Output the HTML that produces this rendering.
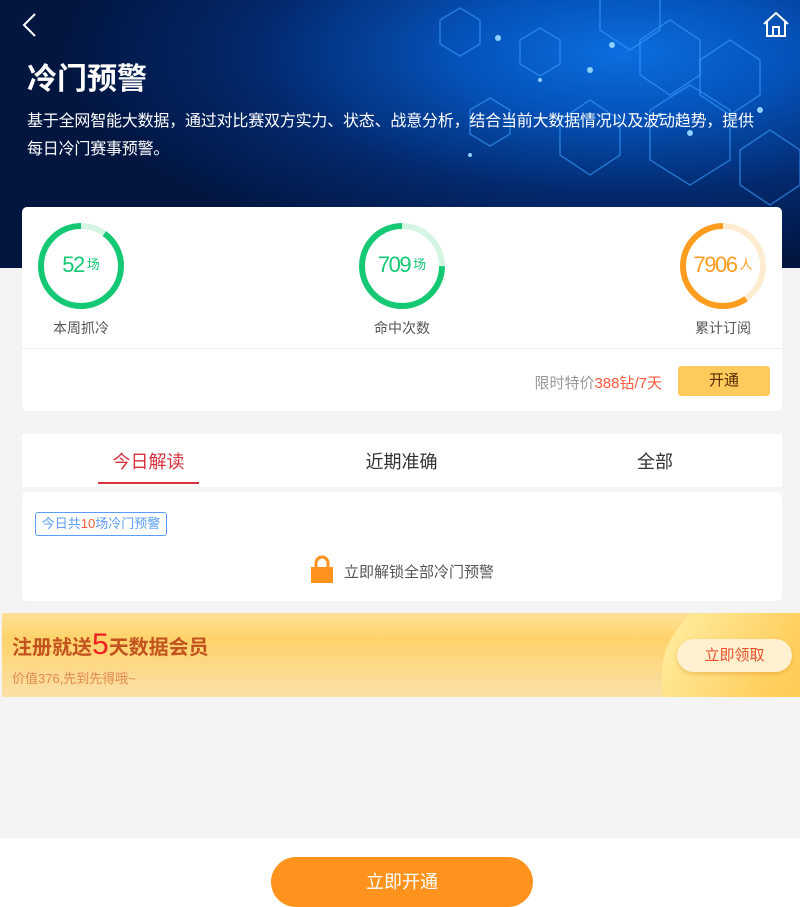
<!DOCTYPE html>
<html><head><meta charset="utf-8"><style>
*{margin:0;padding:0;box-sizing:border-box}
body{width:800px;height:907px;background:#f4f4f4;font-family:"Liberation Sans","Noto Sans CJK SC",sans-serif;position:relative;overflow:hidden}
.hd{position:absolute;left:0;top:0;width:800px;height:268px;background:radial-gradient(ellipse 70% 80% at 78% 20%,#0a6ee0 0%,#0552b8 30%,#03296e 65%,#021640 100%);overflow:hidden}
.hd h1{position:absolute;left:27px;top:54px;color:#fff;font-size:30px;font-weight:bold}
.hd p{position:absolute;left:27px;top:108px;width:755px;color:#fff;font-size:16px;line-height:28px;letter-spacing:-0.2px}
.card{position:absolute;left:22px;width:760px;background:#fff;border-radius:5px}
.ring{position:absolute;top:221px;width:90px;height:90px}
.lbl{position:absolute;top:318px;font-size:14px;color:#555;width:120px;text-align:center}
.num{position:absolute;top:252px;width:90px;text-align:center;font-size:22px;letter-spacing:-1.5px}
.num small{font-size:13px;letter-spacing:0;vertical-align:3px;margin-left:3px}
</style></head><body>
<div class="hd">
<svg width="800" height="268" style="position:absolute;left:0;top:0" fill="none" stroke="#3b9cff" stroke-opacity=".6" stroke-width="1.5">
<polygon points="640,40 670,20 700,40 700,75 670,95 640,75"/>
<polygon points="700,60 730,40 760,60 760,95 730,115 700,95"/>
<polygon points="470,110 490,98 510,110 510,134 490,146 470,134"/>
<polygon points="560,120 590,100 620,120 620,155 590,175 560,155"/>
<polygon points="650,110 690,85 730,110 730,160 690,185 650,160"/>
<polygon points="740,150 770,130 800,150 800,185 770,205 740,185"/>
<polygon points="440,20 460,8 480,20 480,44 460,56 440,44"/>
<polygon points="520,40 540,28 560,40 560,64 540,76 520,64"/>
<polygon points="600,0 630,-20 660,0 660,30 630,50 600,30"/>
<g fill="#8fd0ff" stroke="none"><circle cx="498" cy="38" r="3"/><circle cx="612" cy="45" r="3"/><circle cx="590" cy="70" r="3"/><circle cx="540" cy="80" r="2"/><circle cx="690" cy="133" r="3"/><circle cx="760" cy="110" r="3"/><circle cx="470" cy="155" r="2"/><circle cx="660" cy="115" r="2"/></g>
</svg>
<svg style="position:absolute;left:20px;top:12px" width="20" height="26"><polyline points="15,2 4,13 15,24" stroke="#fff" stroke-width="2" fill="none"/></svg>
<svg style="position:absolute;left:762px;top:10px" width="28" height="28" fill="none" stroke="#fff" stroke-width="2"><polyline points="2,14 14,3 26,14"/><polyline points="5,12 5,26 23,26 23,12"/><rect x="11" y="17" width="6" height="9"/></svg>
<h1>冷门预警</h1>
<p>基于全网智能大数据，通过对比赛双方实力、状态、战意分析，结合当前大数据情况以及波动趋势，提供<br>每日冷门赛事预警。</p>
</div>
<div class="card" style="top:207px;height:204px"></div>
<div style="position:absolute;left:22px;top:348px;width:760px;height:1px;background:#f0f0f0"></div>
<svg class="ring" style="left:36px" viewBox="0 0 90 90"><circle cx="45" cy="45" r="40" fill="none" stroke="#d5f5e3" stroke-width="6"/><circle cx="45" cy="45" r="40" fill="none" stroke="#14c874" stroke-width="6" stroke-dasharray="226 300" transform="rotate(-90 45 45) scale(1,-1) translate(0,-90)"/></svg>
<svg class="ring" style="left:357px" viewBox="0 0 90 90"><circle cx="45" cy="45" r="40" fill="none" stroke="#d5f5e3" stroke-width="6"/><circle cx="45" cy="45" r="40" fill="none" stroke="#14c874" stroke-width="6" stroke-dasharray="188 300" transform="rotate(-90 45 45) scale(1,-1) translate(0,-90)"/></svg>
<svg class="ring" style="left:678px" viewBox="0 0 90 90"><circle cx="45" cy="45" r="40" fill="none" stroke="#fdebd2" stroke-width="6"/><circle cx="45" cy="45" r="40" fill="none" stroke="#ff9d1e" stroke-width="6" stroke-dasharray="150 300" transform="rotate(-90 45 45) scale(1,-1) translate(0,-90)"/></svg>
<div class="num" style="left:36px;color:#14c874">52<small>场</small></div>
<div class="num" style="left:357px;color:#14c874">709<small>场</small></div>
<div class="num" style="left:678px;color:#ff9d1e">7906<small>人</small></div>
<div class="lbl" style="left:21px">本周抓冷</div>
<div class="lbl" style="left:342px">命中次数</div>
<div class="lbl" style="left:663px">累计订阅</div>
<div style="position:absolute;right:138px;top:372px;font-size:15px;color:#999">限时特价<span style="color:#ff5a3c">388钻/7天</span></div>
<div style="position:absolute;left:678px;top:366px;width:92px;height:30px;background:#fccb5c;border-radius:3px;text-align:center;line-height:30px;font-size:15px;color:#5a2a00">开通</div>
<div class="card" style="top:434px;height:53px;border-radius:0"></div>
<div style="position:absolute;left:22px;top:448px;width:253px;text-align:center;font-size:18px;color:#d8303c">今日解读</div>
<div style="position:absolute;left:275px;top:448px;width:253px;text-align:center;font-size:18px;color:#333">近期准确</div>
<div style="position:absolute;left:528px;top:448px;width:254px;text-align:center;font-size:18px;color:#333">全部</div>
<div style="position:absolute;left:98px;top:482px;width:101px;height:2px;background:#d8303c"></div>
<div class="card" style="top:492px;height:109px"></div>
<div style="position:absolute;left:35px;top:512px;width:132px;height:24px;border:1px solid #5a9cf8;border-radius:3px;font-size:13px;color:#5a9cf8;line-height:22px;text-align:center">今日共<span style="color:#ff5a3c">10</span>场冷门预警</div>
<svg style="position:absolute;left:311px;top:555px" width="22" height="28"><path d="M5,13 V8 a6,6 0 0 1 12,0 V13" fill="none" stroke="#ff931e" stroke-width="3"/><rect x="0" y="12" width="22" height="16" fill="#ff931e"/></svg>
<div style="position:absolute;left:344px;top:561px;font-size:15px;color:#555">立即解锁全部冷门预警</div>
<div style="position:absolute;left:2px;top:613px;width:798px;height:84px;background:linear-gradient(180deg,#ffe199,#ffd36a 30%,#fbe0a8);overflow:hidden">
<div style="position:absolute;left:660px;top:-40px;width:300px;height:200px;border-radius:50% 0 0 0;background:linear-gradient(120deg,#fff3b0,#ffd060 40%,#ffb32a)"></div>
<div style="position:absolute;left:10px;top:15px;font-size:20px;font-weight:bold;color:#c2521e">注册就送<span style="color:#f02020;font-size:30px;font-weight:normal">5</span>天数据会员</div>
<div style="position:absolute;left:10px;top:55px;font-size:13px;color:#e38a50">价值376,先到先得哦~</div>
<div style="position:absolute;left:675px;top:26px;width:115px;height:33px;background:#fff0d0;border-radius:17px;text-align:center;line-height:33px;font-size:15px;color:#e8502a;box-shadow:0 2px 4px rgba(200,120,0,.3)">立即领取</div>
</div>
<div style="position:absolute;left:0;top:838px;width:800px;height:69px;background:#fff"></div>
<div style="position:absolute;left:271px;top:857px;width:262px;height:50px;background:#ff931e;border-radius:25px;text-align:center;line-height:50px;font-size:18px;color:#fff">立即开通</div>
</body></html>
